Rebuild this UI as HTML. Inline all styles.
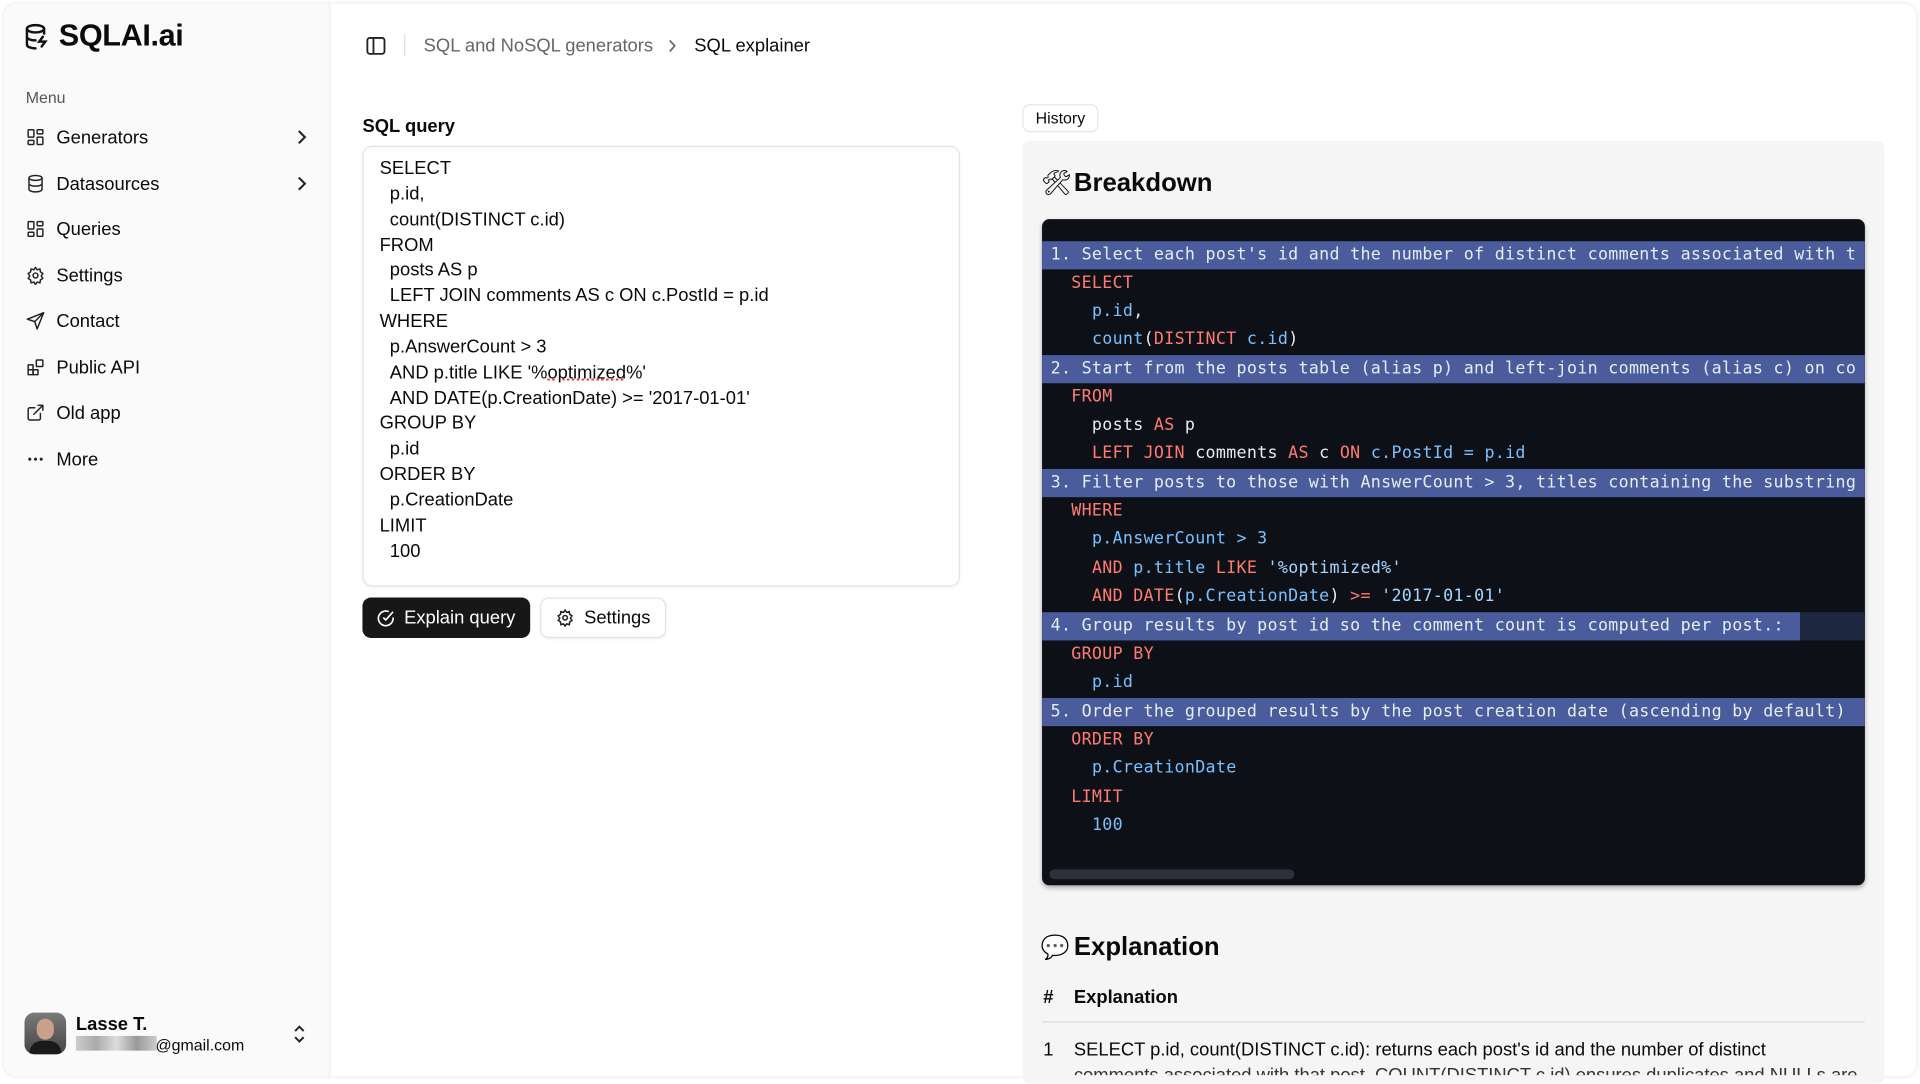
<!DOCTYPE html>
<html><head><meta charset="utf-8"><style>
*{box-sizing:border-box;margin:0;padding:0}
html,body{width:1920px;height:1080px;overflow:hidden;background:#fff}
#s{position:absolute;left:0;top:0;width:1568px;height:882px;transform:scale(1.22449);transform-origin:0 0;font-family:"Liberation Sans",sans-serif;color:#0a0a0a}
.abs{position:absolute}
.frame{left:3px;top:3px;width:1562px;height:876px;border-radius:10px;background:#fff;box-shadow:0 0 3px rgba(0,0,0,.12);overflow:hidden}
.side{left:3px;top:3px;width:267px;height:876px;background:#fafafa;border-right:1px solid #ececec;border-radius:10px 0 0 10px}
.mi{position:absolute;left:21px;font-size:15px;display:flex;align-items:center;height:20px}
.mi svg{width:16px;height:16px;margin-right:9px;stroke:#222;fill:none;stroke-width:1.8;stroke-linecap:round;stroke-linejoin:round}
.chev{position:absolute;left:241px;width:10px;height:12px}
.code{font-family:"DejaVu Sans Mono","Liberation Mono",monospace;font-size:13.6px;color:#e6edf3;white-space:pre;letter-spacing:.25px}
.ln{position:absolute;left:0;height:23px;line-height:23px;padding-left:7px}
.hl{background:#4a5c9c;right:0}
.k{color:#ff7b72}.b{color:#79c0ff}.st{color:#a5d6ff}
.q{position:absolute;left:310px;font-size:15px;line-height:20.85px}
</style></head><body><div id="s">
<div class="abs frame"></div>
<div class="abs side"></div>
<svg class="abs" style="left:20px;top:19px" width="20" height="22" viewBox="0 0 20 22" fill="none" stroke="#111" stroke-width="2" stroke-linecap="round"><ellipse cx="9" cy="4.5" rx="7" ry="3"/><path d="M2 4.5v13c0 1.7 3 3 7 3M2 11c0 1.7 3 3 7 3M16 4.5v4M15 11l-3 4h5l-3 4"/></svg>
<div class="abs" style="left:48px;top:15px;font-size:25px;font-weight:bold;letter-spacing:-.3px">SQLAI.ai</div>
<div class="abs" style="left:21px;top:72px;font-size:13px;color:#555">Menu</div>
<div class="mi" style="top:102px"><svg viewBox="0 0 24 24"><rect x="3" y="3" width="7" height="9" rx="1"/><rect x="14" y="3" width="7" height="5" rx="1"/><rect x="14" y="12" width="7" height="9" rx="1"/><rect x="3" y="16" width="7" height="5" rx="1"/></svg>Generators</div>
<div class="mi" style="top:140px"><svg viewBox="0 0 24 24"><ellipse cx="12" cy="5" rx="8" ry="3"/><path d="M4 5v14c0 1.7 3.6 3 8 3s8-1.3 8-3V5M4 12c0 1.7 3.6 3 8 3s8-1.3 8-3"/></svg>Datasources</div>
<div class="mi" style="top:177px"><svg viewBox="0 0 24 24"><rect x="3" y="3" width="7" height="9" rx="1"/><rect x="14" y="3" width="7" height="5" rx="1"/><rect x="14" y="12" width="7" height="9" rx="1"/><rect x="3" y="16" width="7" height="5" rx="1"/></svg>Queries</div>
<div class="mi" style="top:215px"><svg viewBox="0 0 24 24"><circle cx="12" cy="12" r="3"/><path d="M12 2l2 3 3.5-1 .5 3.5 3 2-2 3 2 3-3 2-.5 3.5-3.5-1-2 3-2-3-3.5 1-.5-3.5-3-2 2-3-2-3 3-2 .5-3.5 3.5 1z"/></svg>Settings</div>
<div class="mi" style="top:252px"><svg viewBox="0 0 24 24"><path d="M22 2L2 10l9 3 3 9zM11 13l11-11"/></svg>Contact</div>
<div class="mi" style="top:290px"><svg viewBox="0 0 24 24"><rect x="3" y="9" width="6" height="6"/><rect x="3" y="15" width="6" height="6"/><rect x="9" y="15" width="6" height="6"/><rect x="13" y="3" width="8" height="8" rx="1"/></svg>Public API</div>
<div class="mi" style="top:327px"><svg viewBox="0 0 24 24"><path d="M15 3h6v6M10 14L21 3M18 13v6a2 2 0 0 1-2 2H5a2 2 0 0 1-2-2V8a2 2 0 0 1 2-2h6"/></svg>Old app</div>
<div class="mi" style="top:365px"><svg viewBox="0 0 24 24"><circle cx="5" cy="12" r="1"/><circle cx="12" cy="12" r="1"/><circle cx="19" cy="12" r="1"/></svg>More</div>
<svg class="chev" style="top:106px" viewBox="0 0 10 12" fill="none" stroke="#222" stroke-width="1.7"><path d="M3 1l5 5-5 5"/></svg>
<svg class="chev" style="top:144px" viewBox="0 0 10 12" fill="none" stroke="#222" stroke-width="1.7"><path d="M3 1l5 5-5 5"/></svg>
<div class="abs" style="left:20px;top:827px;width:34px;height:34px;border-radius:8px;background:linear-gradient(#7a7a7a,#444);overflow:hidden"><div style="position:absolute;left:10px;top:5px;width:14px;height:17px;border-radius:7px;background:#c9a08a"></div><div style="position:absolute;left:4px;top:23px;width:26px;height:14px;border-radius:10px 10px 0 0;background:#1a1a1a"></div></div>
<div class="abs" style="left:62px;top:828px;font-size:15px;font-weight:bold">Lasse T.</div>
<div class="abs" style="left:62px;top:846px;width:66px;height:12px;background:linear-gradient(90deg,#ccc,#aaa,#ddd,#999,#ccc)"></div>
<div class="abs" style="left:127px;top:846px;font-size:13px">@gmail.com</div>
<svg class="abs" style="left:239px;top:837px" width="11" height="15" viewBox="0 0 11 15" fill="none" stroke="#222" stroke-width="1.6"><path d="M2 5l3.5-3.5L9 5M2 10l3.5 3.5L9 10"/></svg>

<svg class="abs" style="left:299px;top:30px" width="16" height="15" viewBox="0 0 16 15" fill="none" stroke="#222" stroke-width="1.5"><rect x="1" y="1" width="14" height="13" rx="2"/><path d="M6 1v13"/></svg>
<div class="abs" style="left:330px;top:28px;width:1px;height:18px;background:#ddd"></div>
<div class="abs" style="left:346px;top:29px;font-size:15px;color:#666">SQL and NoSQL generators</div>
<svg class="abs" style="left:545px;top:32px" width="8" height="11" viewBox="0 0 8 11" fill="none" stroke="#666" stroke-width="1.4"><path d="M2 1l4 4.5L2 10"/></svg>
<div class="abs" style="left:567px;top:29px;font-size:15px">SQL explainer</div>

<div class="abs" style="left:296px;top:95px;font-size:15px;font-weight:bold;font-weight:600">SQL query</div>
<div class="abs" style="left:296px;top:119px;width:488px;height:360px;border:1px solid #e3e3e3;border-radius:8px;box-shadow:0 1px 2px rgba(0,0,0,.05)"></div>
<div class="q" style="top:128px">SELECT<br>&nbsp;&nbsp;p.id,<br>&nbsp;&nbsp;count(DISTINCT c.id)<br>FROM<br>&nbsp;&nbsp;posts AS p<br>&nbsp;&nbsp;LEFT JOIN comments AS c ON c.PostId = p.id<br>WHERE<br>&nbsp;&nbsp;p.AnswerCount &gt; 3<br>&nbsp;&nbsp;AND p.title LIKE '%<span style="text-decoration:underline dotted #e33">optimized</span>%'<br>&nbsp;&nbsp;AND DATE(p.CreationDate) &gt;= '2017-01-01'<br>GROUP BY<br>&nbsp;&nbsp;p.id<br>ORDER BY<br>&nbsp;&nbsp;p.CreationDate<br>LIMIT<br>&nbsp;&nbsp;100</div>
<div class="abs" style="left:296px;top:488px;width:137px;height:33px;background:#171717;border-radius:7px;color:#fff;font-size:15px;display:flex;align-items:center;padding-left:11px"><svg width="16" height="16" viewBox="0 0 24 24" fill="none" stroke="#fff" stroke-width="2" style="margin-right:7px"><path d="M21 11v1a9 9 0 1 1-5.3-8.2"/><path d="M21 4L12 14l-3-3"/></svg>Explain query</div>
<div class="abs" style="left:441px;top:488px;width:103px;height:33px;border:1px solid #e3e3e3;border-radius:7px;font-size:15px;display:flex;align-items:center;padding-left:12px;box-shadow:0 1px 2px rgba(0,0,0,.06)"><svg width="15" height="15" viewBox="0 0 24 24" fill="none" stroke="#222" stroke-width="2" style="margin-right:8px"><circle cx="12" cy="12" r="3"/><path d="M12 2l2 3 3.5-1 .5 3.5 3 2-2 3 2 3-3 2-.5 3.5-3.5-1-2 3-2-3-3.5 1-.5-3.5-3-2 2-3-2-3 3-2 .5-3.5 3.5 1z"/></svg>Settings</div>

<div class="abs" style="left:835px;top:85px;width:62px;height:23px;border:1px solid #e5e5e5;border-radius:6px;font-size:13px;text-align:center;line-height:21px">History</div>
<div class="abs" style="left:835px;top:115px;width:704px;height:770px;background:#f5f5f5;border-radius:6px"></div>
<div class="abs" style="left:850px;top:137px;font-size:20px">🛠</div>
<div class="abs" style="left:877px;top:138px;font-size:21px;font-weight:bold">Breakdown</div>
<div class="abs code" style="left:851px;top:179px;width:672px;height:544px;background:#0d1117;border-radius:6px;overflow:hidden;box-shadow:0 2px 4px rgba(0,0,0,.3)">
<div class="ln hl" style="top:18px">1. Select each post's id and the number of distinct comments associated with t</div>
<div class="ln" style="top:41px">  <span class="k">SELECT</span></div>
<div class="ln" style="top:64px">    <span class="b">p.id</span>,</div>
<div class="ln" style="top:87px">    <span class="b">count</span>(<span class="k">DISTINCT</span> <span class="b">c.id</span>)</div>
<div class="ln hl" style="top:111px">2. Start from the posts table (alias p) and left-join comments (alias c) on co</div>
<div class="ln" style="top:134px">  <span class="k">FROM</span></div>
<div class="ln" style="top:157px">    posts <span class="k">AS</span> p</div>
<div class="ln" style="top:180px">    <span class="k">LEFT JOIN</span> comments <span class="k">AS</span> c <span class="k">ON</span> <span class="b">c.PostId = p.id</span></div>
<div class="ln hl" style="top:204px">3. Filter posts to those with AnswerCount &gt; 3, titles containing the substring</div>
<div class="ln" style="top:227px">  <span class="k">WHERE</span></div>
<div class="ln" style="top:250px">    <span class="b">p.AnswerCount &gt; 3</span></div>
<div class="ln" style="top:274px">    <span class="k">AND</span> <span class="b">p.title</span> <span class="k">LIKE</span> <span class="st">'%optimized%'</span></div>
<div class="ln" style="top:297px">    <span class="k">AND DATE</span>(<span class="b">p.CreationDate</span>) <span class="k">&gt;=</span> <span class="st">'2017-01-01'</span></div>
<div class="ln" style="top:321px;right:0;background:#1d2740"></div>
<div class="ln" style="top:321px;width:619px;background:#4a5c9c">4. Group results by post id so the comment count is computed per post.:</div>
<div class="ln" style="top:344px">  <span class="k">GROUP BY</span></div>
<div class="ln" style="top:367px">    <span class="b">p.id</span></div>
<div class="ln hl" style="top:391px">5. Order the grouped results by the post creation date (ascending by default)</div>
<div class="ln" style="top:414px">  <span class="k">ORDER BY</span></div>
<div class="ln" style="top:437px">    <span class="b">p.CreationDate</span></div>
<div class="ln" style="top:461px">  <span class="k">LIMIT</span></div>
<div class="ln" style="top:484px">    <span class="b">100</span></div>
<div class="abs" style="left:6px;top:531px;width:200px;height:8px;border-radius:4px;background:#2d3038"></div>
</div>
<div class="abs" style="left:850px;top:762px;font-size:19px">💬</div>
<div class="abs" style="left:877px;top:762px;font-size:21px;font-weight:bold">Explanation</div>
<div class="abs" style="left:852px;top:806px;font-size:15px;font-weight:bold">#</div>
<div class="abs" style="left:877px;top:806px;font-size:15px;font-weight:bold">Explanation</div>
<div class="abs" style="left:851px;top:834px;width:672px;height:1px;background:#dcdcdc"></div>
<div class="abs" style="left:852px;top:849px;font-size:15px">1</div>
<div class="abs" style="left:877px;top:849px;font-size:15px">SELECT p.id, count(DISTINCT c.id): returns each post's id and the number of distinct</div>
<div class="abs" style="left:877px;top:870px;font-size:15px;height:8px;overflow:hidden;color:#333">comments associated with that post. COUNT(DISTINCT c.id) ensures duplicates and NULLs are ignored</div>
</div></body></html>
